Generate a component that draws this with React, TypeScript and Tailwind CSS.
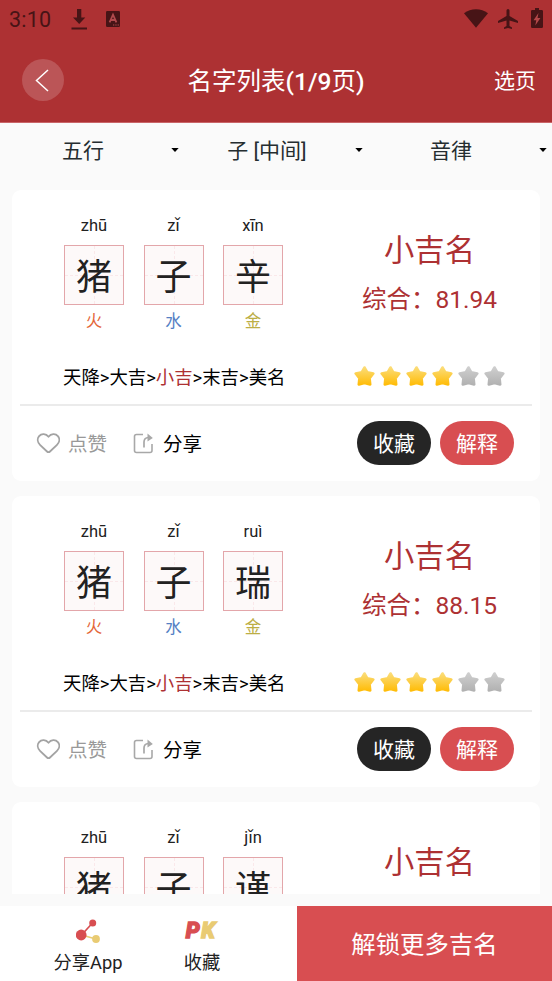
import { clsx } from 'clsx'

interface ICharacter {
  pinyin: string
  char: string
  element: string
  elementClassName: string
}

interface INameCardProps {
  score: string
  characters: ICharacter[]
}

// 名字数据
const zhu: ICharacter = {
  pinyin: 'zhū',
  char: '猪',
  element: '火',
  elementClassName: 'text-[#e4673a]',
}

const zi: ICharacter = {
  pinyin: 'zǐ',
  char: '子',
  element: '水',
  elementClassName: 'text-[#5580c4]',
}

const gold = {
  element: '金',
  elementClassName: 'text-[#bcae45]',
}

const names: INameCardProps[] = [
  { score: '81.94', characters: [zhu, zi, { pinyin: 'xīn', char: '辛', ...gold }] },
  { score: '88.15', characters: [zhu, zi, { pinyin: 'ruì', char: '瑞', ...gold }] },
  { score: '', characters: [zhu, zi, { pinyin: 'jǐn', char: '谨', ...gold }] },
]

// 状态栏
function StatusBar() {
  return (
    <div className="flex h-[38px] items-center pl-[9px] pr-[9px] text-[#471416]">
      <span className="w-[62px] pt-[2px] text-[21.5px] leading-[38px] tracking-[0.2px]">3:10</span>
      <svg className="mt-[-1px] h-[22px] w-4" viewBox="0 0 16 22" fill="currentColor">
        <path d="M6 1h4.300v8.500h4L8.200 16 2 9.500h4zM.5 19.500h15.500v2H.5z" />
      </svg>
      <svg className="ml-[19px] mt-[-1px] h-4 w-[14px]" viewBox="0 0 14 16">
        <rect width="14" height="16" rx="1.300" fill="currentColor" />
        <path
          d="M3.600 11.300 7 3.700l3.400 7.600M4.800 9h4.400"
          fill="none"
          stroke="#b14a4d"
          strokeWidth="1.800"
        />
        <path d="M7 14h1.300M9.300 14h1.300M11.600 14h1.300" stroke="#b14a4d" strokeWidth="1" />
      </svg>
      <div className="ml-auto flex items-center">
        <svg className="mt-[-2px] h-[19px] w-6" viewBox="0 0 24 19" fill="currentColor">
          <path d="M12 18.700 0 4.200Q5.400.300 12 .300T24 4.200z" />
        </svg>
        <svg className="ml-[10px] mt-[-1px] h-5 w-5" viewBox="2 2 20 20" fill="currentColor">
          <path d="M22 16v-2l-8.500-5V3.500a1.500 1.500 0 0 0-3 0V9L2 14v2l8.500-2.500V19L8 20.500V22l4-1 4 1v-1.500L13.500 19v-5.500z" />
        </svg>
        <svg className="ml-[13px] mt-[-2px] h-5 w-3" viewBox="0 0 12 20" fill="currentColor">
          <path d="M4 0h4v2h2.700Q12 2 12 3.300v15.400Q12 20 10.700 20H1.300Q0 20 0 18.700V3.300Q0 2 1.300 2H4z" />
          <path d="M7.500 5 2.500 12.300h2.800L4.300 17.500 9.400 10H6.500z" fill="#b4484a" />
        </svg>
      </div>
    </div>
  )
}

// 标题栏
function Header() {
  return (
    <header className="h-[123px] shrink-0 border-b border-[#c96568] bg-[#ad3133] text-white">
      <StatusBar />
      <div className="grid h-[84px] grid-cols-[100px_1fr_100px] items-center">
        <button className="ml-[22px] flex size-[42px] items-center justify-center rounded-full bg-[#bb5557]">
          <svg className="mr-[2px] h-[23px] w-[14px]" viewBox="0 0 14 23" fill="none">
            <path d="M13 1 1.500 11.500 13 22" stroke="white" strokeWidth="1.500" />
          </svg>
        </button>
        <h1 className="pt-[3px] text-center text-[24.5px] leading-8">
          名字列表<span className="font-medium">(1/9</span>页
          <span className="font-medium">)</span>
        </h1>
        <span className="pr-4 pt-[3px] text-right text-[21px]">选页</span>
      </div>
    </header>
  )
}

// 筛选栏
function Filters() {
  return (
    <div className="grid h-[67px] shrink-0 grid-cols-[184px_184px_184px] text-[21px] text-[#252d30]">
      {['五行', '子 [中间]', '音律'].map((label) => (
        <div key={label} className="flex h-[54px] items-center">
          <span className="w-[166px] pt-[3px] text-center">{label}</span>
          <svg className="ml-[5px] h-1 w-[8px]" viewBox="0 0 8 4">
            <path d="M.300 0h7.400L4 4z" fill="black" />
          </svg>
        </div>
      ))}
    </div>
  )
}

function Star({ active }: { active: boolean }) {
  return (
    <svg className="size-[22px]" viewBox="0 0 22 22">
      <defs>
        <linearGradient id="starOn" x1="0" y1="0" x2="0" y2="1">
          <stop offset="0" stopColor="#fbdc77" />
          <stop offset="1" stopColor="#ffbd0a" />
        </linearGradient>
        <linearGradient id="starOff" x1="0" y1="0" x2="0" y2="1">
          <stop offset="0" stopColor="#cecece" />
          <stop offset="1" stopColor="#b2b2b2" />
        </linearGradient>
      </defs>
      <path
        d="m10.500 2.500 2.800 4.900 6 1.100-3.700 4.800.6 6.200-5.700-1.600-5.700 1.600.600-6.200-3.700-4.800 6-1.100z"
        fill={active ? 'url(#starOn)' : 'url(#starOff)'}
        stroke={active ? 'url(#starOn)' : 'url(#starOff)'}
        strokeWidth="2.600"
        strokeLinejoin="round"
      />
    </svg>
  )
}

function CharacterBox({ pinyin, char, element, elementClassName }: ICharacter) {
  return (
    <div className="flex w-[60px] flex-col items-center">
      <span className="text-[16.5px] leading-[22px] text-[#222]">{pinyin}</span>
      {/* 田字格 */}
      <div className="relative mt-2 size-[60px] border border-[#e3a6aa] bg-[#fdf9f9]">
        <div className="absolute left-[29px] top-0 h-full border-l border-dashed border-[#fae8ea]" />
        <div className="absolute left-0 top-[29px] w-full border-t border-dashed border-[#fae8ea]" />
        <span className="relative block pt-[2px] text-center text-[36px] leading-[60px] text-[#222]">
          {char}
        </span>
      </div>
      <span className={clsx('mt-[6px] text-[16.5px] leading-[22px]', elementClassName)}>
        {element}
      </span>
    </div>
  )
}

function NameCard({ score, characters }: INameCardProps) {
  return (
    <article className="h-[291px] shrink-0 rounded-[9px] bg-white px-2">
      <div className="flex h-[214px]">
        <div className="w-[324px] pl-11 pt-[25px]">
          <div className="flex gap-[19.5px]">
            {characters.map((item) => (
              <CharacterBox key={item.char} {...item} />
            ))}
          </div>
          <p className="ml-[-1px] mt-[31px] whitespace-nowrap text-[18.4px] leading-[28px] text-black">
            天降&gt;大吉&gt;<span className="text-[#ad3133]">小吉</span>&gt;末吉&gt;美名
          </p>
        </div>
        <div className="flex w-[171px] flex-col items-center text-[#ad3133]">
          <span className="mt-[41px] text-[30.3px] leading-10">小吉名</span>
          {score && (
            <span className="mt-[13px] whitespace-nowrap text-[24.5px] leading-8">
              综合：{score}
            </span>
          )}
          <div className="mt-[49px] flex gap-1">
            {[1, 2, 3, 4, 5, 6].map((n) => (
              <Star key={n} active={n <= 4} />
            ))}
          </div>
        </div>
      </div>
      <div className="h-[2px] bg-[#ebebeb]" />
      <div className="flex h-[73px] items-center pl-4 pr-[18px] text-[19.5px]">
        <svg className="size-6" viewBox="0 0 24 24" fill="none">
          <path
            d="M12.500 21.200q-.800 0-1.500-.700L4 13.800C1.400 11.200 1 7.600 3.100 5.100c2.400-2.900 6.900-2.600 9.400.700 2.500-3.300 7-3.600 9.400-.700 2.100 2.500 1.700 6.100-.900 8.700l-7 6.700q-.700.700-1.500.700z"
            stroke="#a3a3a3"
            strokeWidth="1.800"
            strokeLinejoin="round"
          />
        </svg>
        <span className="ml-2 pt-[5px] text-[#999]">点赞</span>
        <svg className="ml-[26px] h-[22px] w-[21px]" viewBox="0 0 21 22" fill="none">
          <path
            d="M10 2.500H3.500Q1.500 2.500 1.500 4.500v14q0 2 2 2H17q2 0 2-2V12"
            stroke="#a8a8a8"
            strokeWidth="1.600"
          />
          <path d="M11 15.500v-5.500q0-4.200 4.500-4.500" stroke="#a8a8a8" strokeWidth="1.700" />
          <path d="M14.500 1.500 19.800 6l-5.300 3.500z" fill="#a8a8a8" />
        </svg>
        <span className="ml-[9px] pt-[5px] text-black">分享</span>
        <button className="ml-auto h-11 w-[74px] rounded-full bg-[#252525] pt-[5px] text-[21px] text-white">
          收藏
        </button>
        <button className="ml-[9px] h-11 w-[74px] rounded-full bg-[#d84e51] pt-[5px] text-[21px] text-white">
          解释
        </button>
      </div>
    </article>
  )
}

// 底部操作栏
function BottomBar() {
  return (
    <footer className="flex h-[75px] shrink-0 bg-white text-[18.3px] leading-6 text-[#222]">
      <div className="flex w-[297px] pl-[31px]">
        <div className="flex w-[114px] flex-col items-center">
          <svg className="mt-[13px] h-6 w-[25px]" viewBox="0.5 0 25 24">
            <path d="M6 16 17 4" stroke="#d84e51" strokeWidth="1.700" />
            <path d="m6 16 14.500 4" stroke="#e9cb73" strokeWidth="1.700" />
            <circle cx="5.700" cy="16" r="5.400" fill="#d84e51" />
            <circle cx="17.200" cy="4" r="3.500" fill="#d84e51" />
            <circle cx="20.500" cy="20" r="3.900" fill="#e9cb73" />
          </svg>
          <span className="mt-2">分享App</span>
        </div>
        <div className="flex w-[114px] flex-col items-center">
          <span className="ml-[-2px] mt-3 flex h-6 font-['Roboto'] text-[22px] font-black italic leading-[26px] tracking-[1.5px]">
            <span className="text-[#d84e51] [-webkit-text-stroke:1.3px_#d84e51]">P</span>
            <span className="text-[#e9cb73] [-webkit-text-stroke:1.3px_#e9cb73]">K</span>
          </span>
          <span className="mt-[9px]">收藏</span>
        </div>
      </div>
      <button className="flex-1 bg-[#d84e51] pt-[2px] text-[24.4px] text-white">
        解锁更多吉名
      </button>
    </footer>
  )
}

export default function App() {
  return (
    <div className="flex h-[981px] w-[552px] flex-col overflow-hidden bg-[#fafafa] font-['Roboto','Noto_Sans_CJK_SC',sans-serif]">
      <Header />
      <Filters />
      <main className="mb-[12px] flex min-h-0 flex-1 flex-col gap-[15px] overflow-hidden px-3">
        {names.map((name) => (
          <NameCard key={name.characters[2].char} {...name} />
        ))}
      </main>
      <BottomBar />
    </div>
  )
}
